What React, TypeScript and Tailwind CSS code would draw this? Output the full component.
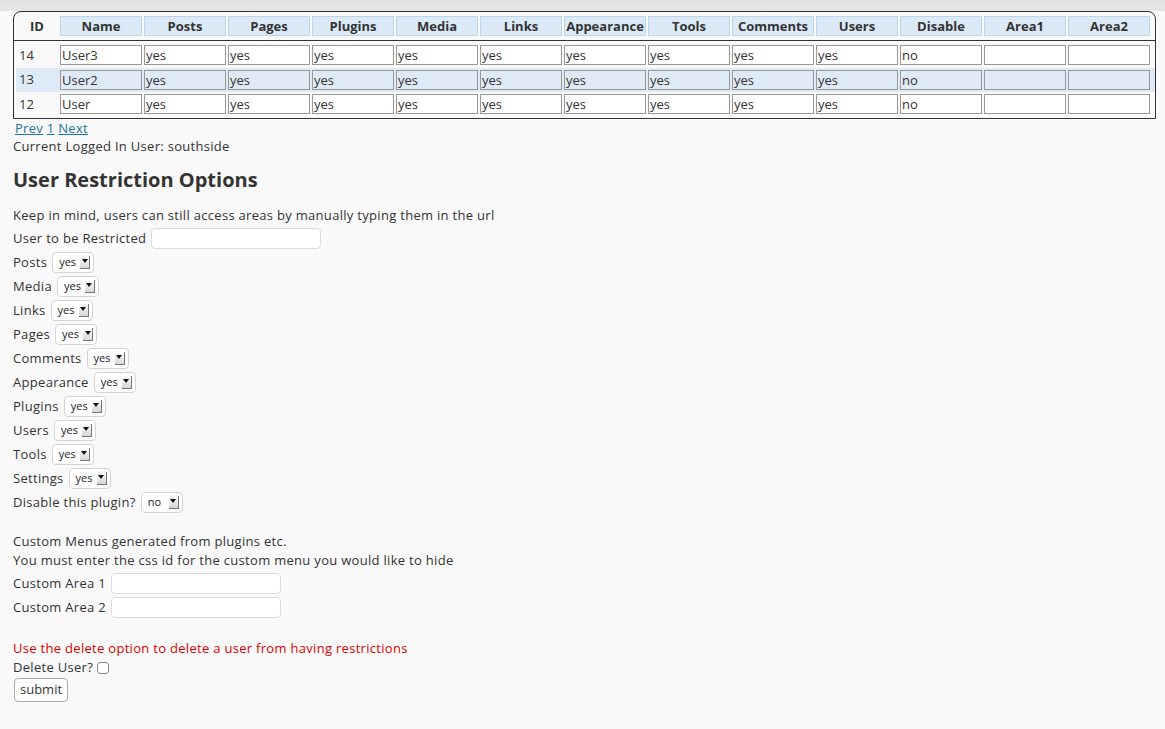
import React from 'react';

const font = { fontFamily: '"Open Sans", "Liberation Sans", sans-serif' };

const columns = ['Name', 'Posts', 'Pages', 'Plugins', 'Media', 'Links', 'Appearance', 'Tools', 'Comments', 'Users', 'Disable', 'Area1', 'Area2'];

const rows = [
  { id: '14', name: 'User3', highlight: false },
  { id: '13', name: 'User2', highlight: true },
  { id: '12', name: 'User', highlight: false },
];

const Select: React.FC<{ value: string }> = ({ value }) => (
  <div className="ml-[5px] inline-flex h-[21px] w-[42px] items-center rounded-[4px] border border-[#d4d4d4] bg-white pl-[6px] pr-[3px] text-[11px] tracking-normal text-[#222]">
    <span>{value}</span>
    <span className="ml-auto flex h-[13px] w-[10px] items-start justify-center border-b border-r border-[#777] bg-gradient-to-b from-[#fdfdfd] to-[#d6d6d6] pt-[3px]">
      <svg width="6" height="4" viewBox="0 0 6 4">
        <path d="M0 0 L6 0 L3 4 Z" fill="#111" />
      </svg>
    </span>
  </div>
);

const TextBox: React.FC<{ className?: string }> = ({ className }) => (
  <div className={`h-[21px] w-[170px] rounded-[4px] border border-[#dcdcdc] bg-white ${className ?? ''}`} />
);

const selectRows: [string, string][] = [
  ['Posts', 'yes'],
  ['Media', 'yes'],
  ['Links', 'yes'],
  ['Pages', 'yes'],
  ['Comments', 'yes'],
  ['Appearance', 'yes'],
  ['Plugins', 'yes'],
  ['Users', 'yes'],
  ['Tools', 'yes'],
  ['Settings', 'yes'],
  ['Disable this plugin?', 'no'],
];

export default function App() {
  return (
    <div className="min-h-screen bg-[#f9f9f9] text-[13px] text-[#333]" style={font}>
      <div className="h-[11px] bg-gradient-to-b from-[#e2e2e2] to-[#e6e6e6]" />

      {/* users table */}
      <div className="ml-[13px] w-[1143px] rounded-t-[8px] border border-[#333]">
        <div className="border-b border-[#333] pb-[4px] pl-[2px] pt-[4px]">
          <div className="grid h-[20px] grid-cols-[42px_repeat(13,82px)] gap-x-[2px]">
            <div className="text-center font-bold leading-[20px]">ID</div>
            {columns.map(c => (
              <div key={c} className="border border-[#bcd5ec] bg-[#dceaf7] text-center font-bold leading-[18px]">
                {c}
              </div>
            ))}
          </div>
        </div>
        <div className="pb-[1px] pl-[2px] pt-[2px]">
          {rows.map(r => (
            <div
              key={r.id}
              className={`grid h-[24.5px] grid-cols-[42px_repeat(13,82px)] items-center gap-x-[2px] ${r.highlight ? 'bg-[#deebf7]' : ''}`}
            >
              <div className="pl-[3px]">{r.id}</div>
              {columns.map((c, i) => {
                const val = i === 0 ? r.name : c === 'Disable' ? 'no' : c.startsWith('Area') ? '' : 'yes';
                return (
                  <div
                    key={c}
                    className={`h-[20px] border border-[#999] pl-[1px] leading-[18px] ${r.highlight ? 'bg-[#deebf7]' : 'bg-white'}`}
                  >
                    {val}
                  </div>
                );
              })}
            </div>
          ))}
        </div>
      </div>

      <div className="pl-[13px] tracking-[0.3px]">
        <div className="pl-[2px] leading-[18px]">
          <a href="#" className="text-[#21759b] underline">Prev</a>{' '}
          <a href="#" className="text-[#21759b] underline">1</a>{' '}
          <a href="#" className="text-[#21759b] underline">Next</a>
        </div>
        <div className="leading-[18px]">Current Logged In User: southside</div>

        <h2 className="mt-[10px] text-[20px] font-bold leading-[30px] tracking-normal">User Restriction Options</h2>

        <p className="mt-[11px] leading-[18px]">Keep in mind, users can still access areas by manually typing them in the url</p>

        <div className="mt-[3px] flex flex-col">
          <div className="flex h-[24px] items-center">
            <span>User to be Restricted</span>
            <TextBox className="ml-[5px]" />
          </div>
          {selectRows.map(([label, v]) => (
            <div key={label} className="flex h-[24px] items-center">
              <span>{label}</span>
              <Select value={v} />
            </div>
          ))}
        </div>

        <p className="mt-[17px] leading-[18px]">Custom Menus generated from plugins etc.</p>
        <p className="mt-[1px] leading-[18px]">You must enter the css id for the custom menu you would like to hide</p>
        <div className="mt-[3px] flex h-[24px] items-center">
          <span>Custom Area 1</span>
          <TextBox className="ml-[5px]" />
        </div>
        <div className="flex h-[24px] items-center">
          <span>Custom Area 2</span>
          <TextBox className="ml-[5px]" />
        </div>

        <p className="mt-[19px] leading-[18px] text-[#dd0000]">Use the delete option to delete a user from having restrictions</p>
        <div className="mt-[2px] flex h-[18px] items-center">
          <span>Delete User?</span>
          <span className="ml-[4px] inline-block h-[12px] w-[12px] rounded-[3px] border border-[#888] bg-white" />
        </div>
        <button className="mt-[1px] ml-[1px] h-[24px] rounded-[4px] border border-[#aaa] bg-white px-[5px] text-[13px] tracking-normal text-[#333]">
          submit
        </button>
      </div>
    </div>
  );
}
